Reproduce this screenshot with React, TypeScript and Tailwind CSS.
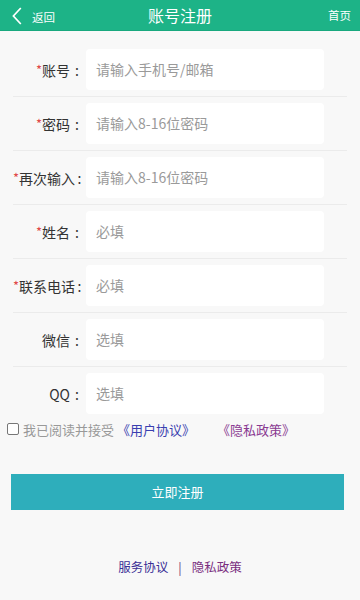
import React from "react";

const font = { fontFamily: '"Noto Sans CJK SC", "Noto Sans", sans-serif' };

const rows: { label: string; req: boolean; ph: string; border: boolean }[] = [
  { label: "账号", req: true, ph: "请输入手机号/邮箱", border: true },
  { label: "密码", req: true, ph: "请输入8-16位密码", border: true },
  { label: "再次输入", req: true, ph: "请输入8-16位密码", border: true },
  { label: "姓名", req: true, ph: "必填", border: true },
  { label: "联系电话", req: true, ph: "必填", border: true },
  { label: "微信", req: false, ph: "选填", border: true },
  { label: "QQ", req: false, ph: "选填", border: false },
];

export default function App() {
  return (
    <div className="w-[360px] h-[600px] bg-[#f8f8f8] overflow-hidden" style={font}>
      <div className="h-[31px] bg-[#1db387] border-b border-[#18a87e] flex items-center relative">
        <div className="flex items-center pl-[12px]">
          <svg width="10" height="18" viewBox="0 0 10 18" className="mt-[1px]">
            <path d="M8.8 1 L1.4 9 L8.8 17" fill="none" stroke="#fff" strokeWidth="1.7" />
          </svg>
          <span className="text-white text-[11.5px] ml-[10px] mt-[5px] leading-none">返回</span>
        </div>
        <div className="absolute left-0 right-0 top-0 h-[30px] flex items-center justify-center pointer-events-none">
          <span className="text-white text-[16px] leading-none">账号注册</span>
        </div>
        <span className="ml-auto mr-[9px] text-white text-[11.5px] leading-none mt-[2px]">首页</span>
      </div>

      <div className="pt-[12px] px-[13px]">
        {rows.map((r, i) => (
          <div
            key={i}
            className={`flex items-center ${r.border ? "border-b border-[#ebebeb] h-[54px]" : "h-[53px]"}`}
          >
            <div className="w-[71px] flex justify-end items-center text-[14px] text-[#333] leading-none whitespace-nowrap">
              {r.req && <span className="text-[#e04848] text-[13px]">*</span>}
              <span>{r.label}</span>
              <span className="inline-block w-[14px] text-center">:</span>
            </div>
            <div className="ml-[2px] w-[238px] h-[41px] bg-white rounded-[4px] flex items-center pl-[10px] text-[14px] text-[#9a9a9a]">
              {r.ph}
            </div>
          </div>
        ))}
      </div>

      <div className="flex items-center pl-[7px] mt-[1px] h-[16px] text-[13px] leading-none">
        <span className="w-[12px] h-[12px] border border-[#777] rounded-[2px] bg-white inline-block" />
        <span className="ml-[4px] text-[#999]">我已阅读并接受</span>
        <span className="ml-[3px] text-[#3a3fb0]">《用户协议》</span>
        <span className="ml-[22px] text-[#8a3a92]">《隐私政策》</span>
      </div>

      <div className="mt-[37px] ml-[11px] w-[333px] h-[36px] bg-[#2eaebb] flex items-center justify-center text-white text-[13px]">
        立即注册
      </div>

      <div className="mt-[51px] flex items-center justify-center text-[12.5px] leading-none">
        <span className="text-[#3a2f96]">服务协议</span>
        <span className="mx-[10px] text-[#6a3a7a]">|</span>
        <span className="text-[#7a2f7f]">隐私政策</span>
      </div>
    </div>
  );
}
